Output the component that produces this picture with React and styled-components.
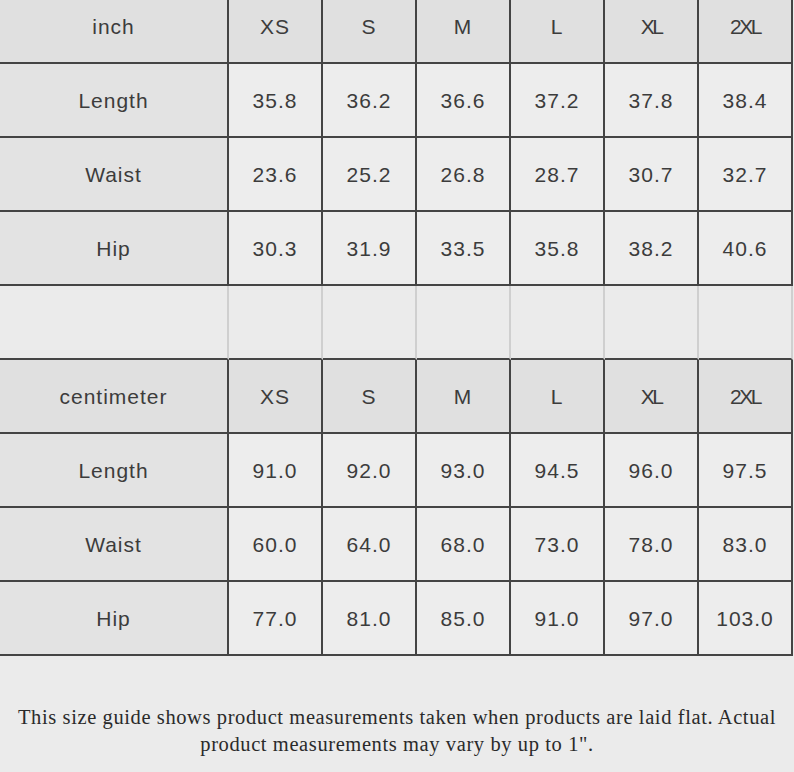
import React from "react";
import styled, { createGlobalStyle } from "styled-components";

const sizes = ["XS", "S", "M", "L", "XL", "2XL"];

const charts = [
  {
    unit: "inch",
    rows: [
      { name: "Length", values: ["35.8", "36.2", "36.6", "37.2", "37.8", "38.4"] },
      { name: "Waist", values: ["23.6", "25.2", "26.8", "28.7", "30.7", "32.7"] },
      { name: "Hip", values: ["30.3", "31.9", "33.5", "35.8", "38.2", "40.6"] },
    ],
  },
  {
    unit: "centimeter",
    rows: [
      { name: "Length", values: ["91.0", "92.0", "93.0", "94.5", "96.0", "97.5"] },
      { name: "Waist", values: ["60.0", "64.0", "68.0", "73.0", "78.0", "83.0"] },
      { name: "Hip", values: ["77.0", "81.0", "85.0", "91.0", "97.0", "103.0"] },
    ],
  },
];

const SizeGuide = () => {
  return (
    <Page>
      <Grid>
        {charts.map((chart, i) => (
          <React.Fragment key={chart.unit}>
            {i > 0 && (
              <>
                <Cell $kind="blank" />
                {sizes.map((s) => (
                  <Cell key={s} $kind="blank" />
                ))}
              </>
            )}
            <Cell $kind="head">{chart.unit}</Cell>
            {sizes.map((s) => (
              <Cell key={s} $kind="head" $tight={s.includes("XL")}>
                {s}
              </Cell>
            ))}
            {chart.rows.map((row) => (
              <React.Fragment key={row.name}>
                <Cell $kind="label">{row.name}</Cell>
                {row.values.map((v, j) => (
                  <Cell key={j} $kind="value">
                    {v}
                  </Cell>
                ))}
              </React.Fragment>
            ))}
          </React.Fragment>
        ))}
      </Grid>
      <Note>
        This size guide shows product measurements taken when products are laid
        flat. Actual product measurements may vary by up to 1".
      </Note>
    </Page>
  );
};

const GlobalStyle = createGlobalStyle`
  html, body {
    margin: 0;
    padding: 0;
    background: #ebebeb;
  }
`;

const Page = styled.div`
  width: 794px;
  height: 772px;
  overflow: hidden;
  background: #ebebeb;
`;

const Grid = styled.div`
  display: grid;
  grid-template-columns: 229px repeat(6, 94px);
  grid-auto-rows: 74px;
  margin-top: -10px;
  font-family: "Liberation Sans", Arial, sans-serif;
  font-size: 21px;
  color: #3c3c3c;
`;

const bg = {
  head: "#e0e0e0",
  label: "#e3e3e3",
  value: "#ededed",
  blank: "#ebebeb",
};

const Cell = styled.div`
  display: flex;
  align-items: center;
  justify-content: center;
  padding-top: 2px;
  background: ${(p) => bg[p.$kind]};
  border-right: 2px solid
    ${(p) => (p.$kind === "blank" ? "#cfcfcf" : "#444")};
  border-bottom: 2px solid #444;
  letter-spacing: ${(p) => (p.$tight ? "-2.5px" : "1px")};
`;

const Note = styled.p`
  margin: 0;
  padding: 48px 0 0;
  text-align: center;
  font-family: "Liberation Serif", "Times New Roman", serif;
  font-size: 20.5px;
  letter-spacing: 0.6px;
  line-height: 27px;
  color: #2a2a2a;
`;

export default function App() {
  return (
    <>
      <GlobalStyle />
      <SizeGuide />
    </>
  );
}
